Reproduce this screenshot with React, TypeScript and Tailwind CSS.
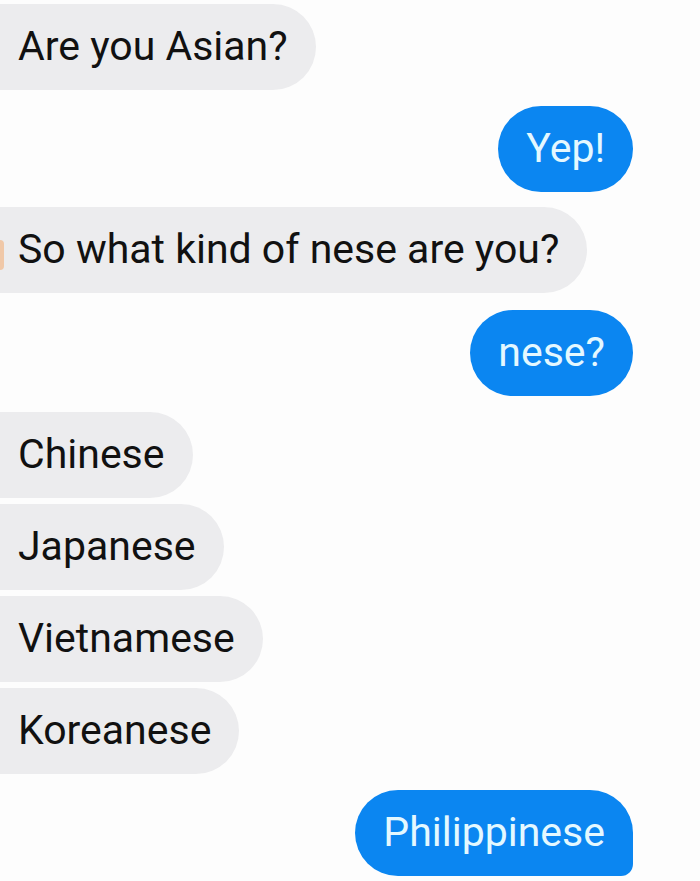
const font = { fontFamily: "Roboto, 'Liberation Sans', sans-serif" };

type Msg = { text: string; me?: boolean; last?: boolean };

const messages: Msg[] = [
  { text: "Are you Asian?" },
  { text: "Yep!", me: true },
  { text: "So what kind of nese are you?" },
  { text: "nese?", me: true },
  { text: "Chinese" },
  { text: "Japanese" },
  { text: "Vietnamese" },
  { text: "Koreanese" },
  { text: "Philippinese", me: true, last: true },
];

function Bubble({ m }: { m: Msg }) {
  if (m.me) {
    return (
      <div className="flex justify-end pr-[67px]">
        <div
          className={
            "h-[86px] flex items-center pl-[28px] pr-[28px] bg-[#0b86f1] text-[#e4f8ff] text-[41px] " +
            (m.last ? "rounded-l-[43px] rounded-tr-[43px] rounded-br-[12px]" : "rounded-[43px]")
          }
        >
          {m.text}
        </div>
      </div>
    );
  }
  return (
    <div className="flex justify-start">
      <div className="h-[86px] flex items-center -ml-[14px] pl-[32px] pr-[28px] bg-[#ececee] text-[#111] text-[41px] rounded-l-[10px] rounded-r-[43px]">
        {m.text}
      </div>
    </div>
  );
}

export default function App() {
  return (
    <div className="w-[700px] h-[881px] bg-[#fdfdfd] overflow-hidden relative" style={font}>
      <div className="absolute left-0 top-[240px] w-[4px] h-[30px] bg-[#f0c8a8] rounded-r" />
      <div className="flex flex-col pt-[4px]">
        <Bubble m={messages[0]} />
        <div className="h-[16px]" />
        <Bubble m={messages[1]} />
        <div className="h-[15px]" />
        <Bubble m={messages[2]} />
        <div className="h-[17px]" />
        <Bubble m={messages[3]} />
        <div className="h-[16px]" />
        <div className="flex flex-col gap-[6px]">
          <Bubble m={messages[4]} />
          <Bubble m={messages[5]} />
          <Bubble m={messages[6]} />
          <Bubble m={messages[7]} />
        </div>
        <div className="h-[16px]" />
        <Bubble m={messages[8]} />
      </div>
    </div>
  );
}
